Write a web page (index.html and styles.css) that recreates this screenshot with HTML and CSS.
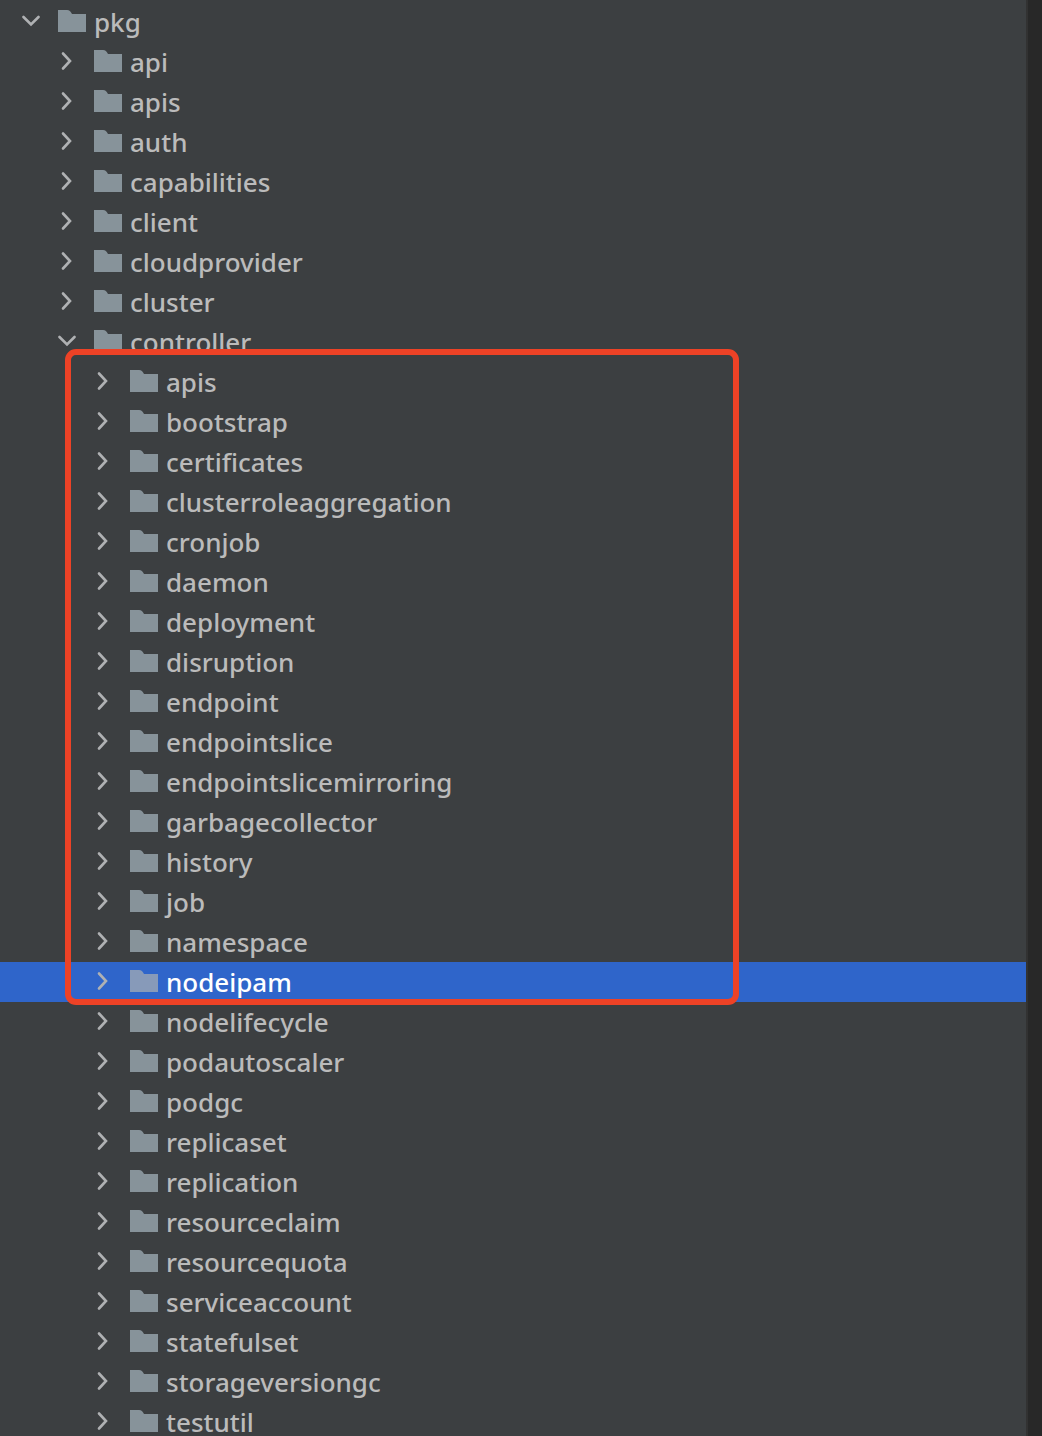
FILE: index.html
```html
<!DOCTYPE html>
<html lang="en">
<head>
  <meta charset="UTF-8">
  <meta name="viewport" content="width=device-width, initial-scale=1.0">
  <title>Project</title>
  <link rel="stylesheet" href="styles.css">
</head>
<body>

<!-- Icons -->
<svg class="icon-defs" aria-hidden="true">
  <symbol id="icon-arrow" viewBox="0 0 20 20">
    <path d="M5 2.5 L12 10 L5 17.5" fill="none" stroke="currentColor" stroke-width="2.6" stroke-linecap="round" stroke-linejoin="miter"/>
  </symbol>
  <symbol id="icon-arrow-open" viewBox="0 0 20 20">
    <path d="M1.5 6 L9 13.5 L16.5 6" fill="none" stroke="currentColor" stroke-width="2.6" stroke-linecap="round" stroke-linejoin="miter"/>
  </symbol>
  <symbol id="icon-folder" viewBox="0 0 28 22">
    <path d="M0 0 H9 C11.5 0 12.5 1.2 14 4 H28 V22 H0 Z" fill="currentColor"/>
  </symbol>
</svg>

<div class="window">
  <nav class="project" aria-label="Project files">
    <ul class="tree" id="tree"></ul>
  </nav>
  <div class="editor"></div>
</div>

<script>
  const controllers = [
    'apis', 'bootstrap', 'certificates', 'clusterroleaggregation', 'cronjob',
    'daemon', 'deployment', 'disruption', 'endpoint', 'endpointslice',
    'endpointslicemirroring', 'garbagecollector', 'history', 'job', 'namespace',
    'nodeipam', 'nodelifecycle', 'podautoscaler', 'podgc', 'replicaset',
    'replication', 'resourceclaim', 'resourcequota', 'serviceaccount',
    'statefulset', 'storageversiongc', 'testutil'
  ];

  const root = {
    name: 'pkg',
    children: [
      'api', 'apis', 'auth', 'capabilities', 'client', 'cloudprovider', 'cluster',
      { name: 'controller', children: controllers, marked: true }
    ]
  };

  function createItem(node) {
    const name = node.name || node;
    const item = document.createElement('li');
    item.innerHTML = `
      <button type="button" class="row${name === 'nodeipam' ? ' selected' : ''}" aria-expanded="${!!node.children}">
        <svg class="arrow" aria-hidden="true"><use href="#icon-arrow${node.children ? '-open' : ''}"/></svg>
        <svg class="folder" aria-hidden="true"><use href="#icon-folder"/></svg>
        <span class="name">${name}</span>
      </button>`;

    if (node.children) {
      const list = document.createElement('ul');
      list.className = 'children';
      node.children.forEach(child => list.appendChild(createItem(child)));
      // Red frame around the highlighted controllers
      if (node.marked) {
        list.classList.add('marked');
      }
      item.appendChild(list);
    }
    return item;
  }

  const tree = document.getElementById('tree');
  tree.appendChild(createItem(root));

  tree.addEventListener('click', function (e) {
    const row = e.target.closest('.row');
    if (!row) return;

    tree.querySelector('.selected').classList.remove('selected');
    row.classList.add('selected');

    // Open or close the folder
    const list = row.nextElementSibling;
    if (list) {
      list.hidden = !list.hidden;
      row.setAttribute('aria-expanded', !list.hidden);
      row.querySelector('.arrow use').setAttribute('href', list.hidden ? '#icon-arrow' : '#icon-arrow-open');
    }
  });
</script>

</body>
</html>
```

FILE: styles.css
```css
*,
*::after {
  box-sizing: border-box;
}
body {
  margin: 0;
  font-family: 'Noto Sans', 'Open Sans', sans-serif;
  background: #282828;
  color: #bbbbbb;
}
.icon-defs {
  display: none;
}
.window {
  display: flex;
  height: 100vh;
  overflow: hidden;
}
.project {
  flex: 1;
  padding-top: 2px;
  background: #3c3f41;
  overflow: hidden;
}
.editor {
  width: 16px;
  background: #282828;
  border-left: 2px solid #323232;
}

/* Tree */
.tree,
.children {
  list-style: none;
  margin: 0;
  padding: 0;
}
.row {
  display: flex;
  align-items: center;
  width: 100%;
  height: 40px;
  padding: 0 0 0 22px;
  border: none;
  background: none;
  color: inherit;
  font-family: inherit;
  font-size: 26px;
  font-weight: 500;
  line-height: 40px;
  text-align: left;
  cursor: pointer;
}
.children .row {
  padding-left: 58px;
}
.children .children .row {
  padding-left: 94px;
}
.row.selected {
  background: #2f65ca;
  color: #ffffff;
}
.arrow {
  width: 20px;
  height: 20px;
  margin-right: 16px;
  margin-bottom: 2px;
  color: #afb1b3;
}
.folder {
  width: 28px;
  height: 22px;
  margin-right: 8px;
  margin-bottom: 2px;
  color: #87939a;
}
.selected .folder {
  color: #879ab9;
}

/* Frame over the first 16 folders */
.marked {
  position: relative;
}
.marked::after {
  content: '';
  position: absolute;
  top: -13px;
  left: 65px;
  width: 674px;
  max-width: calc(100% - 80px);
  height: 656px;
  border: 6px solid #ed4226;
  border-radius: 11px;
  pointer-events: none;
}
```
